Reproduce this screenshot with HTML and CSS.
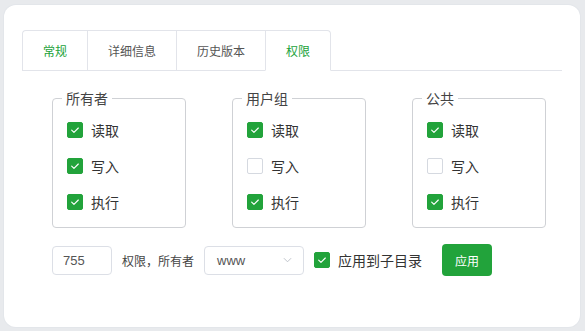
FILE: index.html
```html
<!DOCTYPE html>
<html lang="zh-CN">
<head>
<meta charset="utf-8">
<link rel="stylesheet" href="styles.css">
</head>
<body>
<div class="card">
  <div class="tabs">
    <div class="tab green">常规</div>
    <div class="tab">详细信息</div>
    <div class="tab">历史版本</div>
    <div class="tab active green">权限</div>
    <div class="tab-fill"></div>
  </div>
  <div class="groups">
    <fieldset class="group">
      <legend>所有者</legend>
      <div class="row"><span class="cb on"><svg viewBox="0 0 16 16"><path d="M4.2 8.2l2.6 2.5 5-5"/></svg></span>读取</div>
      <div class="row"><span class="cb on"><svg viewBox="0 0 16 16"><path d="M4.2 8.2l2.6 2.5 5-5"/></svg></span>写入</div>
      <div class="row"><span class="cb on"><svg viewBox="0 0 16 16"><path d="M4.2 8.2l2.6 2.5 5-5"/></svg></span>执行</div>
    </fieldset>
    <fieldset class="group">
      <legend>用户组</legend>
      <div class="row"><span class="cb on"><svg viewBox="0 0 16 16"><path d="M4.2 8.2l2.6 2.5 5-5"/></svg></span>读取</div>
      <div class="row"><span class="cb"></span>写入</div>
      <div class="row"><span class="cb on"><svg viewBox="0 0 16 16"><path d="M4.2 8.2l2.6 2.5 5-5"/></svg></span>执行</div>
    </fieldset>
    <fieldset class="group">
      <legend>公共</legend>
      <div class="row"><span class="cb on"><svg viewBox="0 0 16 16"><path d="M4.2 8.2l2.6 2.5 5-5"/></svg></span>读取</div>
      <div class="row"><span class="cb"></span>写入</div>
      <div class="row"><span class="cb on"><svg viewBox="0 0 16 16"><path d="M4.2 8.2l2.6 2.5 5-5"/></svg></span>执行</div>
    </fieldset>
  </div>
  <div class="bottom">
    <div class="input">755</div>
    <span class="label">权限，所有者</span>
    <div class="select"><span>www</span><svg class="chev" viewBox="0 0 10 6"><path d="M1 1l4 4 4-4"/></svg></div>
    <div class="sub"><span class="cb on"><svg viewBox="0 0 16 16"><path d="M4.2 8.2l2.6 2.5 5-5"/></svg></span>应用到子目录</div>
    <button class="btn">应用</button>
  </div>
</div>
</body>
</html>
```
FILE: styles.css
```css
* { box-sizing: border-box; }
html, body { margin: 0; padding: 0; }
body {
  width: 585px;
  height: 331px;
  background: #e8eaed;
  font-family: "Noto Sans CJK SC", "Noto Sans", sans-serif;
  color: #333;
  padding: 5px 5px 4px 4px;
}
.card {
  background: #fff;
  border-radius: 12px;
  height: 322px;
  width: 576px;
  padding: 25px 18px 0 18px;
  box-shadow: 0 0 0 1px #e3e6ea;
}
.tabs {
  display: flex;
  height: 41px;
}
.tab {
  height: 41px;
  padding: 0 20px;
  font-size: 12px;
  line-height: 40px;
  color: #555;
  border-top: 1px solid #e2e4ea;
  border-left: 1px solid #e2e4ea;
  border-bottom: 1px solid #e2e4ea;
  background: #fff;
}
.tab:first-child { border-top-left-radius: 4px; }
.tab.active {
  border-right: 1px solid #e2e4ea;
  border-bottom-color: #fff;
  border-top-right-radius: 4px;
}
.tab.green { color: #22a23a; }
.tab-fill {
  flex: 1;
  border-bottom: 1px solid #e2e4ea;
}
.groups {
  display: flex;
  gap: 46px;
  padding-left: 30px;
  margin-top: 17px;
}
.group {
  width: 134px;
  margin: 0;
  border: 1px solid #cfd1d5;
  border-radius: 4px;
  padding: 4px 14px 7px 14px;
}
.group legend {
  font-size: 14px;
  line-height: 20px;
  padding: 0 4px;
  margin-left: -5px;
  color: #444;
}
.row {
  display: flex;
  align-items: center;
  height: 36px;
  font-size: 14px;
  color: #333;
}
.cb {
  width: 16px;
  height: 16px;
  border-radius: 2px;
  border: 1px solid #d5d9e0;
  background: #fff;
  margin-right: 8px;
  flex: none;
  display: flex;
}
.cb.on {
  background: #22a33b;
  border-color: #22a33b;
}
.cb svg {
  width: 14px;
  height: 14px;
  fill: none;
  stroke: #fff;
  stroke-width: 1.3;
  stroke-linecap: round;
  stroke-linejoin: round;
}
.bottom {
  display: flex;
  align-items: center;
  padding-left: 30px;
  margin-top: 16px;
}
.input {
  width: 60px;
  height: 29px;
  border: 1px solid #dcdfe6;
  border-radius: 4px;
  padding-left: 10px;
  font-size: 13px;
  line-height: 27px;
  color: #555;
  font-family: "Liberation Sans", "Noto Sans", sans-serif;
}
.label {
  font-size: 12px;
  color: #444;
  margin-left: 10px;
}
.select {
  width: 100px;
  height: 29px;
  margin-left: 10px;
  border: 1px solid #dcdfe6;
  border-radius: 4px;
  display: flex;
  align-items: center;
  justify-content: space-between;
  padding: 0 11px 0 12px;
  font-size: 13px;
  color: #555;
  font-family: "Liberation Sans", "Noto Sans", sans-serif;
}
.chev {
  width: 9px;
  height: 6px;
  fill: none;
  stroke: #b8bcc4;
  stroke-width: 1;
}
.sub {
  display: flex;
  align-items: center;
  margin-left: 10px;
  font-size: 14px;
  color: #333;
}
.btn {
  margin-left: 20px;
  width: 50px;
  height: 32px;
  border: none;
  border-radius: 4px;
  background: #22a33b;
  color: #fff;
  font-size: 12px;
  font-family: "Noto Sans CJK SC", sans-serif;
  padding: 0;
}
```
